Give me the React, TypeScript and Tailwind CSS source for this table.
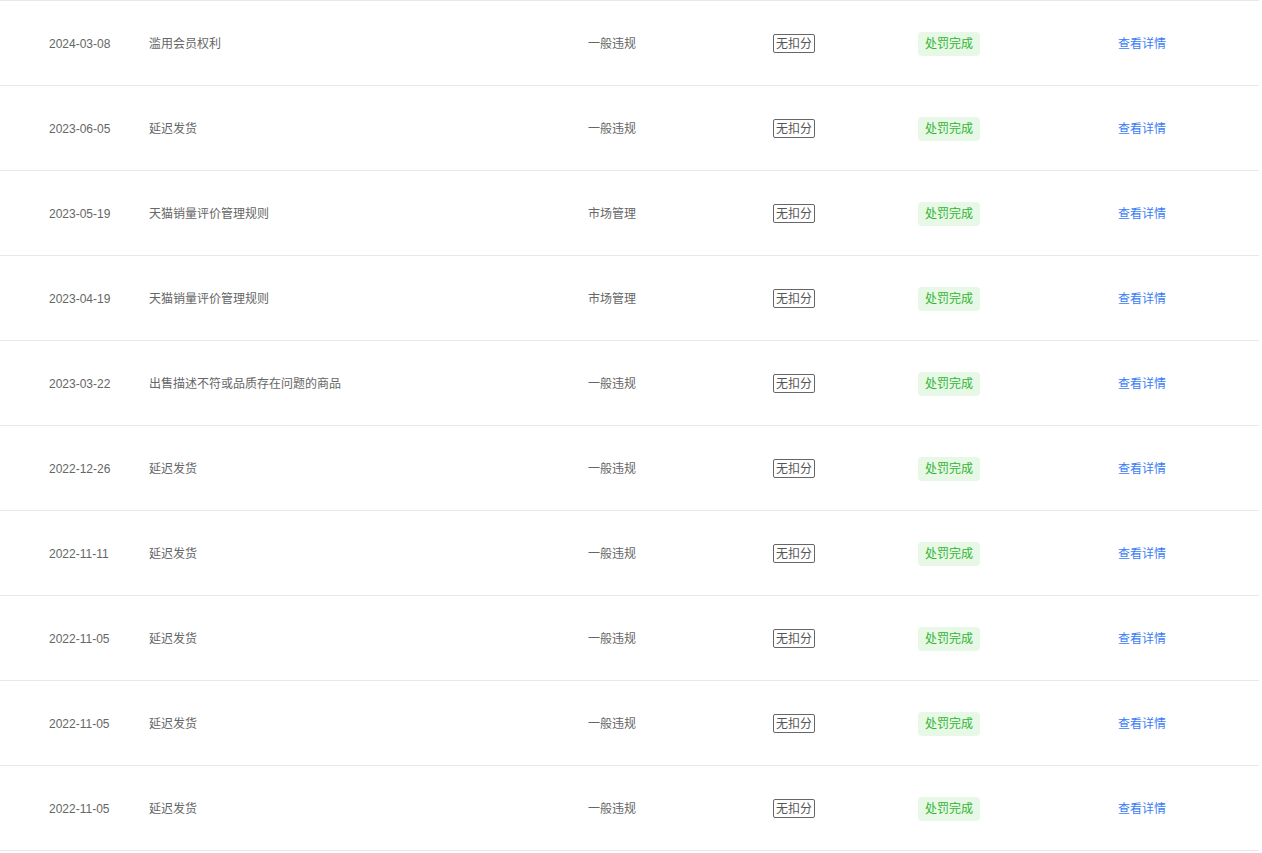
import React from 'react';

type Row = {
  date: string;
  reason: string;
  type: string;
};

const rows: Row[] = [
  { date: '2024-03-08', reason: '滥用会员权利', type: '一般违规' },
  { date: '2023-06-05', reason: '延迟发货', type: '一般违规' },
  { date: '2023-05-19', reason: '天猫销量评价管理规则', type: '市场管理' },
  { date: '2023-04-19', reason: '天猫销量评价管理规则', type: '市场管理' },
  { date: '2023-03-22', reason: '出售描述不符或品质存在问题的商品', type: '一般违规' },
  { date: '2022-12-26', reason: '延迟发货', type: '一般违规' },
  { date: '2022-11-11', reason: '延迟发货', type: '一般违规' },
  { date: '2022-11-05', reason: '延迟发货', type: '一般违规' },
  { date: '2022-11-05', reason: '延迟发货', type: '一般违规' },
  { date: '2022-11-05', reason: '延迟发货', type: '一般违规' },
];

const App: React.FC = () => {
  return (
    <div className="min-h-screen bg-white font-['Liberation_Sans','Noto_Sans_CJK_SC',sans-serif] text-[12px] text-[#666]">
      <div className="w-[1259px] border-t border-[#e8e8e8]">
        {rows.map((row, i) => (
          <div key={i} className="flex h-[85px] items-center border-b border-[#e8e8e8] pt-px">
            <div className="w-[149px] shrink-0 pl-[49px]">{row.date}</div>
            <div className="w-[439px] shrink-0">{row.reason}</div>
            <div className="w-[185px] shrink-0">{row.type}</div>
            <div className="w-[145px] shrink-0">
              <span className="inline-flex h-[19px] items-center rounded-[2px] border border-[#666] px-[2px] leading-none text-[#555]">
                无扣分
              </span>
            </div>
            <div className="w-[200px] shrink-0">
              <span className="inline-flex h-[24px] items-center rounded-[4px] bg-[#e7f8e7] px-[7px] text-[#2fb52f]">
                处罚完成
              </span>
            </div>
            <div className="flex-1">
              <a href="#" className="text-[#3b7cf6]">查看详情</a>
            </div>
          </div>
        ))}
      </div>
    </div>
  );
};

export default App;
